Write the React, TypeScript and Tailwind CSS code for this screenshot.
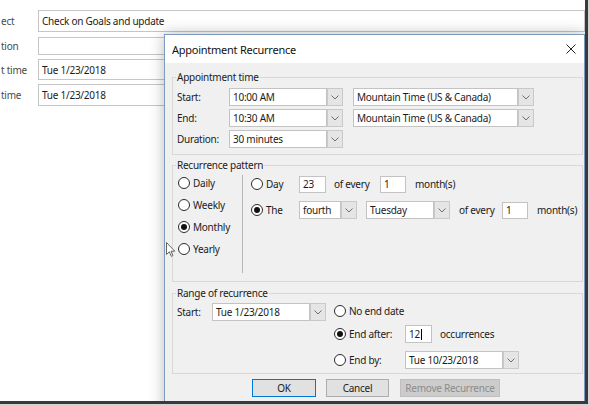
import React from "react";

function Chevron() {
  return (
    <svg width="8" height="5" viewBox="0 0 8 5" className="block">
      <polyline points="0.5,0.5 4,4 7.5,0.5" fill="none" stroke="#6e6e6e" strokeWidth="1" />
    </svg>
  );
}

function Combo({ text, className }: { text: string; className: string }) {
  return (
    <div className={`flex shrink-0 ${className}`}>
      <div className="flex-1 min-w-0 h-full bg-white border border-[#c3c3c3] flex items-center pl-[3px] whitespace-nowrap overflow-hidden">
        {text}
      </div>
      <div className="w-[16px] h-full bg-[#e5e5e5] border border-[#c9c9c9] flex items-center justify-center shrink-0">
        <Chevron />
      </div>
    </div>
  );
}

function Box({ children, className }: { children: React.ReactNode; className: string }) {
  return (
    <div className={`shrink-0 bg-white border border-[#c3c3c3] flex items-center pl-[3px] ${className}`}>
      {children}
    </div>
  );
}

function Radio({ checked }: { checked?: boolean }) {
  return (
    <span className="w-[12px] h-[12px] rounded-full border border-[#2b2b2b] bg-white flex items-center justify-center shrink-0">
      {checked && <span className="w-[6px] h-[6px] rounded-full bg-[#111]" />}
    </span>
  );
}

function RadioLabel({ label, checked, className }: { label: string; checked?: boolean; className?: string }) {
  return (
    <div className={`flex items-center shrink-0 ${className ?? ""}`}>
      <Radio checked={checked} />
      <span className="ml-[3px] whitespace-nowrap">{label}</span>
    </div>
  );
}

export default function App() {
  return (
    <div className="w-[589px] h-[406px] bg-[#d4d4d4] font-['Noto_Sans',sans-serif] text-[10px] tracking-[-0.25px] text-[#1b1b1b] leading-none">
      <div className="relative w-[588px] h-[404px] overflow-hidden bg-white border-r-[3px] border-b-[3px] border-[#3a3a3a]">
        {/* background form */}
        <div className="flex flex-col pt-[10px]">
          <div className="flex items-center h-[22px]">
            <div className="w-[38px] pl-[1px] shrink-0 text-[#4a4a4a]">ect</div>
            <div className="w-[547px] h-full border border-[#c6c6c6] flex items-center pl-[3px] shrink-0">
              Check on Goals and update
            </div>
          </div>
          <div className="flex items-center h-[18px] mt-[5px]">
            <div className="w-[38px] pl-[1px] shrink-0 text-[#4a4a4a]">tion</div>
            <div className="w-[300px] h-full border border-[#c6c6c6] shrink-0" />
          </div>
          <div className="flex items-center h-[21px] mt-[4px]">
            <div className="w-[38px] pl-[1px] shrink-0 text-[#4a4a4a]">t time</div>
            <div className="w-[300px] h-full border border-[#c6c6c6] flex items-center pl-[3px] shrink-0">
              Tue 1/23/2018
            </div>
          </div>
          <div className="flex items-center h-[22px] mt-[4px]">
            <div className="w-[38px] pl-[1px] shrink-0 text-[#4a4a4a]">time</div>
            <div className="w-[300px] h-full border border-[#c6c6c6] flex items-center pl-[3px] shrink-0">
              Tue 1/23/2018
            </div>
          </div>
        </div>

        {/* dialog */}
        <div className="absolute left-[164px] top-[34px] w-[421px] h-[380px] border border-[#7d9bc1] bg-[#f0f0f0] shadow-[0_0_14px_rgba(0,0,0,0.28)] flex flex-col">
          <div className="h-[28px] bg-white flex items-center justify-between pl-[7px] pr-[8px] shrink-0">
            <span className="text-[11px] text-[#111]">Appointment Recurrence</span>
            <svg width="10" height="10" viewBox="0 0 10 10" className="block">
              <path d="M0.5 0.5 L9.5 9.5 M9.5 0.5 L0.5 9.5" stroke="#222" strokeWidth="1" fill="none" />
            </svg>
          </div>

          <div className="flex flex-col pl-[7px] pr-[1px] pt-[7px]">
            {/* Appointment time */}
            <fieldset className="border border-[#d8d8d8] p-0 m-0 min-w-0">
              <legend className="ml-[3px] px-[1px] leading-[14px]">Appointment time</legend>
              <div className="flex flex-col gap-[3px] pt-[4px] pl-[4px] pb-[6px]">
                <div className="flex items-center h-[18px]">
                  <div className="w-[52px] shrink-0">Start:</div>
                  <Combo text="10:00 AM" className="w-[114px] h-[18px]" />
                  <Combo text="Mountain Time (US & Canada)" className="ml-[10px] w-[181px] h-[18px]" />
                </div>
                <div className="flex items-center h-[18px]">
                  <div className="w-[52px] shrink-0">End:</div>
                  <Combo text="10:30 AM" className="w-[114px] h-[18px]" />
                  <Combo text="Mountain Time (US & Canada)" className="ml-[10px] w-[181px] h-[18px]" />
                </div>
                <div className="flex items-center h-[18px]">
                  <div className="w-[52px] shrink-0">Duration:</div>
                  <Combo text="30 minutes" className="w-[114px] h-[18px]" />
                </div>
              </div>
            </fieldset>

            {/* Recurrence pattern */}
            <fieldset className="border border-[#d8d8d8] p-0 m-0 mt-[3px] min-w-0">
              <legend className="ml-[3px] px-[1px] leading-[14px]">Recurrence pattern</legend>
              <div className="flex h-[109px]">
                <div className="w-[69px] pl-[5px] flex flex-col shrink-0">
                  <div className="h-[22px] flex items-center"><RadioLabel label="Daily" /></div>
                  <div className="h-[22px] flex items-center"><RadioLabel label="Weekly" /></div>
                  <div className="h-[22px] flex items-center"><RadioLabel label="Monthly" checked /></div>
                  <div className="h-[22px] flex items-center"><RadioLabel label="Yearly" /></div>
                </div>
                <div className="w-px h-[98px] mt-[3px] bg-[#b8b8b8] shrink-0" />
                <div className="flex flex-col pl-[8px] pt-[3px]">
                  <div className="flex items-center h-[18px]">
                    <RadioLabel label="Day" className="w-[48px]" />
                    <Box className="w-[27px] h-[17px]">23</Box>
                    <span className="ml-[8px] w-[46px] shrink-0 whitespace-nowrap">of every</span>
                    <Box className="w-[26px] h-[17px]">1</Box>
                    <span className="ml-[9px] whitespace-nowrap">month(s)</span>
                  </div>
                  <div className="flex items-center h-[18px] mt-[8px]">
                    <RadioLabel label="The" checked className="w-[48px]" />
                    <Combo text="fourth" className="w-[58px] h-[18px]" />
                    <Combo text="Tuesday" className="ml-[9px] w-[84px] h-[18px]" />
                    <span className="ml-[9px] w-[43px] shrink-0 whitespace-nowrap">of every</span>
                    <Box className="w-[26px] h-[17px]">1</Box>
                    <span className="ml-[9px] whitespace-nowrap">month(s)</span>
                  </div>
                </div>
              </div>
            </fieldset>

            {/* Range of recurrence */}
            <fieldset className="border border-[#d8d8d8] p-0 m-0 mt-[4px] min-w-0">
              <legend className="ml-[3px] px-[1px] leading-[14px]">Range of recurrence</legend>
              <div className="flex pl-[4px] pt-[2px] pb-[4px]">
                <div className="flex items-center h-[18px] mt-[1px] shrink-0">
                  <div className="w-[35px] shrink-0">Start:</div>
                  <Combo text="Tue 1/23/2018" className="w-[114px] h-[18px]" />
                </div>
                <div className="ml-[8px] flex flex-col">
                  <div className="flex items-center h-[18px]">
                    <RadioLabel label="No end date" />
                  </div>
                  <div className="flex items-center h-[18px] mt-[5px]">
                    <RadioLabel label="End after:" checked className="w-[71px]" />
                    <Box className="w-[27px] h-[18px]">
                      12<span className="inline-block w-px h-[11px] bg-black ml-[1px]" />
                    </Box>
                    <span className="ml-[8px] whitespace-nowrap">occurrences</span>
                  </div>
                  <div className="flex items-center h-[18px] mt-[8px]">
                    <RadioLabel label="End by:" className="w-[71px]" />
                    <Combo text="Tue 10/23/2018" className="w-[114px] h-[18px]" />
                  </div>
                </div>
              </div>
            </fieldset>

            {/* buttons */}
            <div className="flex mt-[5px] pl-[80px]">
              <div className="w-[64px] h-[18px] bg-[#e1e1e1] border border-[#0078d7] flex items-center justify-center">OK</div>
              <div className="ml-[10px] w-[63px] h-[18px] bg-[#e1e1e1] border border-[#adadad] flex items-center justify-center">Cancel</div>
              <div className="ml-[11px] w-[100px] h-[18px] bg-[#cccccc] border border-[#bfbfbf] text-[#8c8c8c] flex items-center justify-center whitespace-nowrap">Remove Recurrence</div>
            </div>
          </div>
        </div>

        {/* mouse cursor */}
        <svg className="absolute left-[166px] top-[242px]" width="10" height="16" viewBox="0 0 10 16">
          <path d="M0.5 0.5 L0.5 12.5 L3.3 9.8 L5.3 14.3 L6.9 13.6 L5 9.2 L8.8 9.2 Z" fill="#fff" stroke="#555" strokeWidth="0.9" strokeLinejoin="round" />
        </svg>
      </div>
    </div>
  );
}
